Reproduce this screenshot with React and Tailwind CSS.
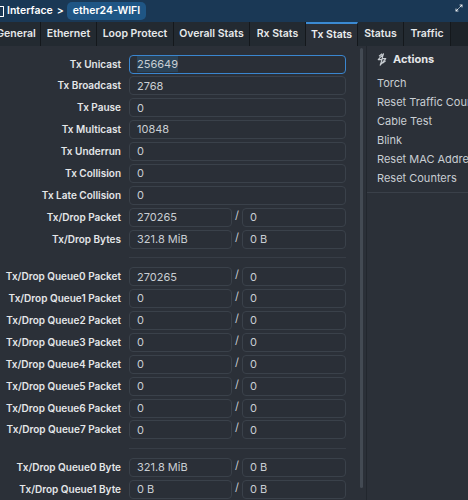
import React from 'react';
import { Maximize2 } from 'lucide-react';

const tabs = [
  { name: 'General', w: 'w-[49px]' },
  { name: 'Ethernet', w: 'w-[56px]' },
  { name: 'Loop Protect', w: 'w-[77px]' },
  { name: 'Overall Stats', w: 'w-[76px]' },
  { name: 'Rx Stats', w: 'w-[56px]' },
  { name: 'Tx Stats', w: 'w-[52px]', active: true },
  { name: 'Status', w: 'w-[46px]' },
  { name: 'Traffic', w: 'w-[47px]' },
];

const single = [
  ['Tx Unicast', '256649'],
  ['Tx Broadcast', '2768'],
  ['Tx Pause', '0'],
  ['Tx Multicast', '10848'],
  ['Tx Underrun', '0'],
  ['Tx Collision', '0'],
  ['Tx Late Collision', '0'],
];

const queuePackets = [
  ['Tx/Drop Queue0 Packet', '270265', '0'],
  ['Tx/Drop Queue1 Packet', '0', '0'],
  ['Tx/Drop Queue2 Packet', '0', '0'],
  ['Tx/Drop Queue3 Packet', '0', '0'],
  ['Tx/Drop Queue4 Packet', '0', '0'],
  ['Tx/Drop Queue5 Packet', '0', '0'],
  ['Tx/Drop Queue6 Packet', '0', '0'],
  ['Tx/Drop Queue7 Packet', '0', '0'],
];

const queueBytes = [
  ['Tx/Drop Queue0 Byte', '321.8 MiB', '0 B'],
  ['Tx/Drop Queue1 Byte', '0 B', '0 B'],
];

const actions = ['Torch', 'Reset Traffic Counters', 'Cable Test', 'Blink', 'Reset MAC Address', 'Reset Counters'];

const Field = ({ value, width, focused }) => (
  <div
    className={`h-[19px] ${width} shrink-0 rounded-[4px] border ${
      focused ? 'border-[#3a86cf]' : 'border-[#3a414a]'
    } bg-[#2a2f37] pl-[7px] flex items-center text-[11px] text-[#c9ced3] overflow-hidden whitespace-nowrap`}
  >
    {focused ? <span className="bg-[#2b4256]">{value}</span> : value}
  </div>
);

const Label = ({ children }) => (
  <div className="w-[121px] shrink-0 text-right text-[10px] font-semibold text-[#e4e6e8] whitespace-nowrap">
    {children}
  </div>
);

const Row = ({ label, value, focused }) => (
  <div className="flex items-center gap-[8px]">
    <Label>{label}</Label>
    <Field value={value} width="w-[217px]" focused={focused} />
  </div>
);

const PairRow = ({ label, a, b }) => (
  <div className="flex items-center gap-[8px]">
    <Label>{label}</Label>
    <div className="flex items-start">
      <Field value={a} width="w-[103px]" />
      <span className="w-[10px] text-center text-[11px] leading-[14px] text-[#c9ced3]">/</span>
      <Field value={b} width="w-[104px]" />
    </div>
  </div>
);

const Divider = () => <div className="ml-[129px] w-[217px] h-px bg-[#373d46] my-[6px]" />;

const ActionsIcon = () => (
  <svg width="12" height="13" viewBox="0 0 12 13" fill="none" stroke="#c9ced3" strokeWidth="1.1" strokeLinejoin="round">
    <path d="M7.5 0.8 L2.2 6.6 H6 L4.2 12.2 L9.8 5.6 H6 Z" />
    <path d="M3 3.2 L6.2 0.8" />
    <path d="M6.4 10.4 L9.6 7.8" />
  </svg>
);

export default function App() {
  return (
    <div className="w-[468px] h-[500px] overflow-hidden bg-[#2b3038] font-['Inter',sans-serif] flex flex-col">
      {/* title bar */}
      <div className="h-[22px] shrink-0 bg-[#1a3855] flex items-center relative">
        <div className="w-[4px] h-[11px] border-r-[1.5px] border-y-[1.5px] border-white rounded-r-[1px]" />
        <span className="ml-[3px] text-[10.5px] font-semibold text-white">Interface</span>
        <span className="ml-[4px] text-[10.5px] font-semibold text-white">&gt;</span>
        <span className="ml-[3px] h-[18px] px-[6px] rounded-[5px] bg-[#1f5685] text-[10.5px] font-semibold text-white flex items-center">
          ether24-WIFI
        </span>
        <Maximize2 size={8} strokeWidth={2.5} className="absolute right-[5px] top-[4px] text-white" />
      </div>

      {/* tab strip */}
      <div className="h-[24px] shrink-0 bg-[#1d2329] flex -ml-[8px]">
        {tabs.map((t) => (
          <div
            key={t.name}
            className={`${t.w} shrink-0 flex items-center justify-center border-r border-[#14181c] text-[10.5px] font-semibold whitespace-nowrap ${
              t.active
                ? 'bg-[#2b3038] border-t-2 border-t-[#3b8ad3] text-[#eceef0]'
                : 'bg-[#232a31] text-[#e6e8ea]'
            }`}
          >
            {t.name}
          </div>
        ))}
      </div>

      <div className="flex flex-1 min-h-0">
        {/* stats form */}
        <div className="w-[366px] shrink-0 flex relative">
          <div className="pt-[8.5px] flex flex-col gap-[2.875px]">
            {single.map(([l, v], i) => (
              <Row key={l} label={l} value={v} focused={i === 0} />
            ))}
            <PairRow label="Tx/Drop Packet" a="270265" b="0" />
            <PairRow label="Tx/Drop Bytes" a="321.8 MiB" b="0 B" />
            <Divider />
            {queuePackets.map(([l, a, b]) => (
              <PairRow key={l} label={l} a={a} b={b} />
            ))}
            <Divider />
            {queueBytes.map(([l, a, b]) => (
              <PairRow key={l} label={l} a={a} b={b} />
            ))}
          </div>
          <div className="absolute right-[3px] top-[2px] w-[3px] h-[440px] rounded-full bg-[#434a53]" />
        </div>

        {/* actions panel */}
        <div className="flex-1 border-l border-[#22272e] bg-[#2b3038]">
          <div className="border-b border-[#3a4049] pb-[4px]">
            <div className="h-[26px] flex items-center pl-[9px] gap-[5px]">
              <ActionsIcon />
              <span className="text-[11px] font-bold text-[#e4e6e8]">Actions</span>
            </div>
            <div className="pt-[2px]">
              {actions.map((a) => (
                <div key={a} className="h-[19px] flex items-center pl-[10px] text-[11px] text-[#c9ced3] whitespace-nowrap">
                  {a}
                </div>
              ))}
            </div>
          </div>
        </div>
      </div>
    </div>
  );
}
